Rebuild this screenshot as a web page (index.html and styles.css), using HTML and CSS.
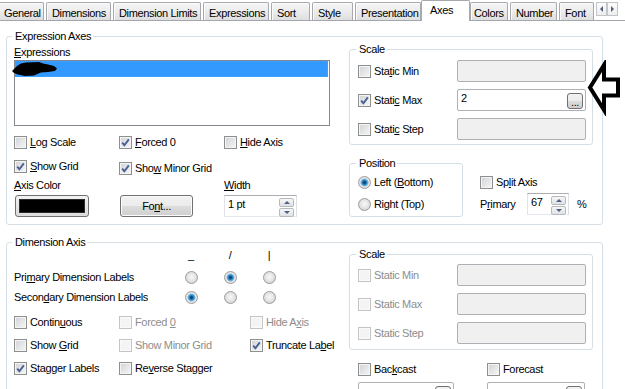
FILE: index.html
```html
<!DOCTYPE html>
<html lang="en">
<head>
    <meta charset="UTF-8">
    <meta name="viewport" content="width=device-width, initial-scale=1.0">
    <title>Chart Properties - Axes</title>
    <link rel="stylesheet" href="styles.css">
</head>
<body>
    <div class="dialog">
        <div class="tabs">
            <div class="tab first">General</div>
            <div class="tab">Dimensions</div>
            <div class="tab">Dimension Limits</div>
            <div class="tab">Expressions</div>
            <div class="tab">Sort</div>
            <div class="tab">Style</div>
            <div class="tab">Presentation</div>
            <div class="tab active">Axes</div>
            <div class="tab narrow">Colors</div>
            <div class="tab">Number</div>
            <div class="tab">Font</div>
            <div class="tab-scroll">
                <span class="scroll-btn left"></span>
                <span class="scroll-btn right"></span>
            </div>
        </div>

        <div class="page">
            <!-- Expression axes -->
            <fieldset class="group outer">
                <legend>Expression Axes</legend>
                <div class="two-col">
                    <div class="expr-left">
                        <div class="field-label"><u>E</u>xpressions</div>
                        <div class="listbox">
                            <div class="list-row selected">
                                <svg class="scribble" width="46" height="17" viewBox="0 0 46 17">
                                    <path d="M0 10 L5 5 L9 2.5 L14 1.5 L27 1 L31 2.5 L36 3.5 L42 5 L45 7.5 L43 10 L36 11 L29 11.5 L22 14.5 L13 15 L6 13.5 L2 12 Z" fill="#000"/>
                                </svg>
                            </div>
                        </div>
                        <div class="check-grid">
                            <div class="check"><span class="cb"></span><span><u>L</u>og Scale</span></div>
                            <div class="check"><span class="cb on"><svg viewBox="0 0 11 11"><path d="M2.2 5.6 L4.4 8.2 L8.8 2.4"/></svg></span><span><u>F</u>orced 0</span></div>
                            <div class="check"><span class="cb"></span><span><u>H</u>ide Axis</span></div>
                            <div class="check"><span class="cb on"><svg viewBox="0 0 11 11"><path d="M2.2 5.6 L4.4 8.2 L8.8 2.4"/></svg></span><span><u>S</u>how Grid</span></div>
                            <div class="check lower"><span class="cb on"><svg viewBox="0 0 11 11"><path d="M2.2 5.6 L4.4 8.2 L8.8 2.4"/></svg></span><span>Sho<u>w</u> Minor Grid</span></div>
                        </div>
                        <div class="color-row">
                            <div class="field-label"><u>A</u>xis Color</div>
                            <div></div>
                            <div class="field-label"><u>W</u>idth</div>
                            <div class="color-btn"><span class="swatch"></span></div>
                            <div class="btn font-btn">Fo<u>n</u>t...</div>
                            <div class="spin width-spin">
                                <span class="spin-val">1 pt</span>
                                <span class="spin-btns"><span class="spin-btn up"></span><span class="spin-btn down"></span></span>
                            </div>
                        </div>
                    </div>

                    <div class="expr-right">
                        <fieldset class="group scale">
                            <legend>Scale</legend>
                            <div class="scale-grid">
                                <div class="check"><span class="cb"></span><span>Sta<u>t</u>ic Min</span></div>
                                <div class="tb"></div>
                                <div class="check"><span class="cb on"><svg viewBox="0 0 11 11"><path d="M2.2 5.6 L4.4 8.2 L8.8 2.4"/></svg></span><span>Stati<u>c</u> Max</span></div>
                                <div class="tb white"><span class="tb-val">2</span><span class="dots-btn">...</span></div>
                                <div class="check"><span class="cb"></span><span>Stati<u>c</u> Step</span></div>
                                <div class="tb"></div>
                            </div>
                        </fieldset>
                        <div class="pos-row">
                            <fieldset class="group position">
                                <legend>Position</legend>
                                <div class="radio-list">
                                    <div class="check"><span class="radio on"></span><span>Left (<u>B</u>ottom)</span></div>
                                    <div class="check"><span class="radio"></span><span>Right (Top)</span></div>
                                </div>
                            </fieldset>
                            <div class="split">
                                <div class="check"><span class="cb"></span><span>Sp<u>l</u>it Axis</span></div>
                                <div class="primary-row">
                                    <span class="primary-label">P<u>r</u>imary</span>
                                    <div class="spin primary-spin">
                                        <span class="spin-val">67</span>
                                        <span class="spin-btns"><span class="spin-btn up"></span><span class="spin-btn down"></span></span>
                                    </div>
                                    <span>%</span>
                                </div>
                            </div>
                        </div>
                    </div>
                </div>
            </fieldset>

            <!-- Dimension axis -->
            <fieldset class="group outer dim">
                <legend>Dimension Axis</legend>
                <div class="two-col">
                    <div class="dim-left">
                        <div class="radio-grid">
                            <div></div>
                            <div class="sym">_</div>
                            <div class="sym">/</div>
                            <div class="sym">|</div>
                            <div>Pri<u>m</u>ary Dimension Labels</div>
                            <span class="radio"></span>
                            <span class="radio on"></span>
                            <span class="radio"></span>
                            <div>Secon<u>d</u>ary Dimension Labels</div>
                            <span class="radio on"></span>
                            <span class="radio"></span>
                            <span class="radio"></span>
                        </div>
                        <div class="check-grid dim-checks">
                            <div class="check"><span class="cb"></span><span>Contin<u>u</u>ous</span></div>
                            <div class="check disabled"><span class="cb"></span><span>Forced <u>0</u></span></div>
                            <div class="check disabled"><span class="cb"></span><span>Hide A<u>x</u>is</span></div>
                            <div class="check"><span class="cb"></span><span>Show <u>G</u>rid</span></div>
                            <div class="check disabled"><span class="cb"></span><span>Show Minor Grid</span></div>
                            <div class="check"><span class="cb on"><svg viewBox="0 0 11 11"><path d="M2.2 5.6 L4.4 8.2 L8.8 2.4"/></svg></span><span>Truncate La<u>b</u>el</span></div>
                            <div class="check"><span class="cb on"><svg viewBox="0 0 11 11"><path d="M2.2 5.6 L4.4 8.2 L8.8 2.4"/></svg></span><span>Stagger Labels</span></div>
                            <div class="check"><span class="cb"></span><span>Re<u>v</u>erse Stagger</span></div>
                        </div>
                    </div>

                    <div class="dim-right">
                        <fieldset class="group scale dim-scale">
                            <legend>Scale</legend>
                            <div class="scale-grid">
                                <div class="check disabled"><span class="cb"></span><span>Static Min</span></div>
                                <div class="tb"></div>
                                <div class="check disabled"><span class="cb"></span><span>Static Max</span></div>
                                <div class="tb"></div>
                                <div class="check disabled"><span class="cb"></span><span>Static Step</span></div>
                                <div class="tb"></div>
                            </div>
                        </fieldset>
                        <div class="cast-grid">
                            <div class="check"><span class="cb"></span><span>Bac<u>k</u>cast</span></div>
                            <div class="check"><span class="cb"></span><span>Forecast</span></div>
                            <div class="tb white"><span class="tb-val"></span><span class="dots-btn"></span></div>
                            <div class="tb white"><span class="tb-val"></span><span class="dots-btn"></span></div>
                        </div>
                    </div>
                </div>
            </fieldset>
        </div>

        <!-- hand-drawn callout pointing at Static Max -->
        <svg class="callout" width="38" height="56" viewBox="0 0 38 56">
            <path d="M5 27.5 L19 5 L19 19.5 L33 19.5 L33 35.5 L19 35.5 L19 50 Z" fill="#fff" stroke="#000" stroke-width="4" stroke-linejoin="miter"/>
        </svg>
    </div>
</body>
</html>
```

FILE: styles.css
```css
* {
    margin: 0;
    padding: 0;
    box-sizing: border-box;
}

body {
    font-family: "Liberation Sans", Arial, sans-serif;
    font-size: 11px;
    line-height: 13px;
    letter-spacing: -0.35px;
    color: #000;
    background: #fff;
    overflow: hidden;
}

.dialog {
    position: relative;
    width: 625px;
    height: 389px;
    overflow: hidden;
}

/* Tabs */
.tabs {
    display: grid;
    grid-template-columns: 46px 65px 88px 66px 39px 41px 66px 45px 38px 47px 35px 1fr;
    column-gap: 2px;
    height: 21px;
    margin-left: -2px;
    align-items: end;
    border-bottom: 1px solid #a3a6ad;
}

.tab {
    height: 18px;
    padding: 4px 0 0 5px;
    white-space: nowrap;
    overflow: hidden;
    border: 1px solid #a7a9ae;
    border-bottom: none;
    border-radius: 2px 2px 0 0;
    background: linear-gradient(#f5f5f5, #ececec 50%, #dedede);
    box-shadow: inset 1px 1px 0 #fbfbfb;
}

.tab.first {
    padding-left: 5px;
}

.tab.narrow {
    padding-left: 3px;
}

.tab.active {
    height: 21px;
    margin: 0 -2px -1px;
    padding: 3px 0 0 8px;
    background: #fff;
    box-shadow: none;
    position: relative;
}

.tab-scroll {
    display: flex;
    align-self: start;
    margin-top: 2px;
}

.scroll-btn {
    width: 11px;
    height: 14px;
    border: 1px solid #c3c5c9;
    background: linear-gradient(#fdfdfd, #ededed);
    display: flex;
    align-items: center;
    justify-content: center;
}

.scroll-btn::after {
    content: "";
    border-top: 3px solid transparent;
    border-bottom: 3px solid transparent;
}

.scroll-btn.left::after {
    border-right: 3px solid #4d5f80;
}

.scroll-btn.right::after {
    border-left: 3px solid #4d5f80;
}

/* Group boxes */
.page {
    padding: 9px 0 0 6px;
}

.group {
    border: 1px solid #d5dfe5;
    border-radius: 3px;
    min-width: 0;
}

.group legend {
    margin-left: -2px;
    padding: 0 2px 0 3px;
    line-height: 13px;
}

.outer {
    width: 597px;
    padding: 0 9px 7px 7px;
}

.outer.dim {
    margin-top: 11px;
    height: 200px;
}

.two-col {
    display: grid;
    grid-template-columns: 316px 244px;
    column-gap: 19px;
    align-items: start;
}

.field-label {
    height: 13px;
    white-space: nowrap;
}

.expr-left {
    padding-top: 3px;
}

.listbox {
    margin-top: 1px;
    height: 66px;
    border: 1px solid #828790;
    background: #fff;
}

.list-row {
    height: 16px;
    display: flex;
    align-items: center;
}

.list-row.selected {
    margin-right: 1px;
    background: #3399ff;
    border: 1px dotted #d9852a;
}

.scribble {
    margin-left: -4px;
    overflow: visible;
}

/* Checkboxes and radios */
.check {
    display: flex;
    align-items: center;
    gap: 3px;
    white-space: nowrap;
}

.check.disabled {
    color: #8d8d8d;
}

.cb {
    width: 13px;
    height: 13px;
    flex: none;
    border: 1px solid #8e8f8f;
    background: linear-gradient(135deg, #cfd2d6, #f7f7f7);
    box-shadow: inset 0 0 0 1px #f4f4f4;
}

.cb svg {
    display: block;
    width: 11px;
    height: 11px;
    fill: none;
    stroke: #4a5f92;
    stroke-width: 1.9;
}

.disabled .cb {
    border-color: #c2c4c6;
    background: #f4f4f4;
    box-shadow: inset 0 0 0 1px #fafafa;
}

.radio {
    width: 13px;
    height: 13px;
    flex: none;
    border-radius: 50%;
    border: 1px solid #9c9c9c;
    background: radial-gradient(circle at 50% 45%, #f8f8f8 0, #e4e4e4 4px, #d6d6d6 6px);
}

.radio.on {
    background: radial-gradient(circle at 50% 50%, #0a355c 0, #16609a 1.5px, #4aa7e0 3px, #a9c6dc 3.8px, #eaeaea 4.5px, #d8d8d8 6px);
}

.check-grid {
    margin-top: 4px;
    display: grid;
    grid-template-columns: 105px 105px 105px;
    grid-auto-rows: 24px;
    align-items: center;
}

.check.lower {
    margin-top: 4px;
}

/* Axis colour, font, width */
.color-row {
    margin-top: 1px;
    display: grid;
    grid-template-columns: 105px 105px 105px;
    grid-template-rows: 13px 22px;
    row-gap: 3px;
}

.color-btn {
    width: 74px;
    height: 22px;
    margin-left: 1px;
    padding: 3px;
    border: 1px solid #707070;
    border-radius: 3px;
    background: linear-gradient(#f2f2f2, #dcdcdc);
}

.swatch {
    display: block;
    height: 100%;
    background: #000;
    border: 1px solid #2a2a2a;
}

.btn {
    height: 22px;
    display: flex;
    align-items: center;
    justify-content: center;
    border: 1px solid #707070;
    border-radius: 3px;
    background: linear-gradient(#f2f2f2, #ebebeb 50%, #dddddd 50%, #cfcfcf);
    box-shadow: inset 0 0 0 1px #fbfbfb;
}

.font-btn {
    width: 73px;
    margin-left: 1px;
}

.spin {
    height: 22px;
    display: flex;
    align-items: flex-start;
    padding: 2px 2px 0 3px;
    border: 1px solid #abadb3;
    border-color: #abadb3 #dbdfe6 #e3e9ef #e2e3ea;
    background: #fff;
}

.spin-val {
    flex: 1;
}

.spin-btns {
    display: grid;
    grid-template-rows: 9px 9px;
    row-gap: 1px;
    width: 15px;
}

.spin-btn {
    border: 1px solid #b7b9bd;
    border-radius: 2px;
    background: linear-gradient(#f7f7f7, #dfe1e4);
    display: flex;
    align-items: center;
    justify-content: center;
}

.spin-btn::after {
    content: "";
    border-left: 3px solid transparent;
    border-right: 3px solid transparent;
}

.spin-btn.up::after {
    border-bottom: 3px solid #4d6185;
}

.spin-btn.down::after {
    border-top: 3px solid #4d6185;
}

.width-spin {
    width: 73px;
}

/* Scale boxes */
.scale {
    width: 244px;
    padding: 4px 6px 4px 8px;
}

.scale-grid {
    display: grid;
    grid-template-columns: 99px 129px;
    grid-auto-rows: 22px;
    row-gap: 7px;
    align-items: center;
}

.tb {
    height: 22px;
    display: flex;
    align-items: flex-start;
    padding: 2px 2px 0 3px;
    border: 1px solid #adb0b5;
    border-radius: 2px;
    background: #f0f0f0;
}

.tb.white {
    background: #fff;
}

.tb-val {
    flex: 1;
}

.dots-btn {
    width: 16px;
    height: 16px;
    margin-top: 1px;
    display: flex;
    align-items: flex-end;
    justify-content: center;
    line-height: 11px;
    border: 1px solid #707070;
    border-radius: 3px;
    background: linear-gradient(#f2f2f2, #ebebeb 50%, #dddddd 50%, #cfcfcf);
}

/* Position and split axis */
.pos-row {
    margin-top: 12px;
    display: flex;
    align-items: flex-start;
}

.position {
    width: 114px;
    padding: 4px 6px 4px 8px;
}

.radio-list {
    display: grid;
    grid-auto-rows: 16px;
    row-gap: 6px;
    align-items: center;
}

.split {
    margin-left: 17px;
    padding-top: 17px;
}

.split .check {
    height: 16px;
}

.primary-row {
    margin-top: 3px;
    display: flex;
    align-items: center;
}

.primary-label {
    width: 47px;
}

.primary-spin {
    width: 42px;
    margin-right: 8px;
}

/* Dimension axis */
.radio-grid {
    display: grid;
    grid-template-columns: 171px 39px 39px 39px;
    grid-template-rows: 18px 20px 20px;
    align-items: center;
    white-space: nowrap;
}

.sym {
    width: 12px;
    align-self: start;
    text-align: center;
}

.dim-checks {
    grid-template-columns: 105px 131px auto;
    grid-auto-rows: 23px;
}

.dim-scale {
    margin-top: -1px;
    padding: 3px 6px 5px 8px;
}

.cast-grid {
    margin-top: 11px;
    padding-left: 9px;
    display: grid;
    grid-template-columns: 96px 98px;
    grid-template-rows: 16px 22px;
    column-gap: 33px;
    row-gap: 5px;
    align-items: center;
}

.callout {
    position: absolute;
    left: 585px;
    top: 60px;
}
```
